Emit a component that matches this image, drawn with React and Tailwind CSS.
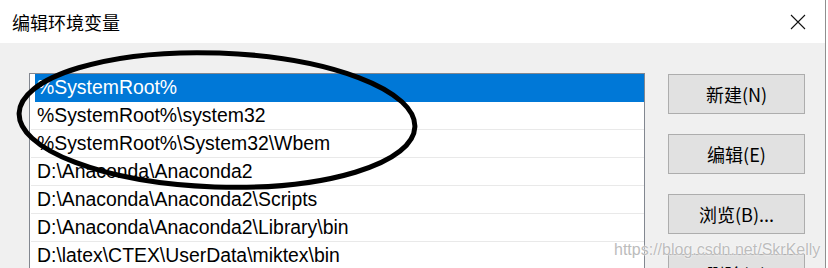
import React from 'react';

const paths = [
  '%SystemRoot%',
  '%SystemRoot%\\system32',
  '%SystemRoot%\\System32\\Wbem',
  'D:\\Anaconda\\Anaconda2',
  'D:\\Anaconda\\Anaconda2\\Scripts',
  'D:\\Anaconda\\Anaconda2\\Library\\bin',
  'D:\\latex\\CTEX\\UserData\\miktex\\bin',
];

const buttons = ['新建(N)', '编辑(E)', '浏览(B)...', '删除(D)'];

const font = "font-['Liberation_Sans','Noto_Sans_CJK_SC',sans-serif]";

export default function App() {
  return (
    <div className={`relative w-[828px] h-[268px] overflow-hidden bg-white flex ${font}`}>
      <div className="w-[826px] h-full flex flex-col border-r border-[#8f8f8f]">
        {/* title bar */}
        <div className="h-[43px] bg-white flex items-center justify-between pl-[12px] pr-[18px] shrink-0">
          <span className="text-[18px] text-black font-['Noto_Sans_CJK_SC',sans-serif] leading-none">编辑环境变量</span>
          <svg width="16" height="16" viewBox="0 0 16 16" className="mr-[1px]">
            <path d="M1 1 L15 15 M15 1 L1 15" stroke="#111" strokeWidth="1.1" />
          </svg>
        </div>

        {/* body */}
        <div className="flex-1 bg-[#f0f0f0] flex items-start pl-[29px] pt-[30px]">
          <div className="w-[616px] h-[400px] bg-white border border-[#828790] pl-[5px]">
            {paths.map((p, i) => (
              <div
                key={p}
                className={
                  i === 0
                    ? 'h-[28px] flex items-center pl-[2px] bg-[#0078d7] text-white text-[19.4px]'
                    : 'h-[28px] flex items-center border-b border-[#e9e9e9] text-black text-[19.4px] -ml-[4px] pl-[6px]'
                }
              >
                {p}
              </div>
            ))}
          </div>

          <div className="ml-[23px] mt-[1px] flex flex-col gap-[20px]">
            {buttons.map(b => (
              <button
                key={b}
                className="w-[137px] h-[40px] bg-[#e1e1e1] border border-[#adadad] text-[18px] text-black flex items-center justify-center font-['Noto_Sans_CJK_SC',sans-serif]"
              >
                {b}
              </button>
            ))}
          </div>
        </div>
      </div>

      {/* hand-drawn ellipse */}
      <svg className="absolute left-0 top-0 pointer-events-none" width="828" height="268">
        <ellipse cx="217" cy="120" rx="198" ry="67" fill="none" stroke="#000" strokeWidth="5" transform="rotate(2 217 120)" />
      </svg>

      {/* watermark */}
      <div className="absolute left-[614px] top-[238px] text-[16px] text-[#bcbcbc] font-['Liberation_Sans',sans-serif] [text-shadow:0_0_2px_#ffffff,0_0_1px_#ffffff]">
        https://blog.csdn.net/SkrKelly
      </div>
    </div>
  );
}
